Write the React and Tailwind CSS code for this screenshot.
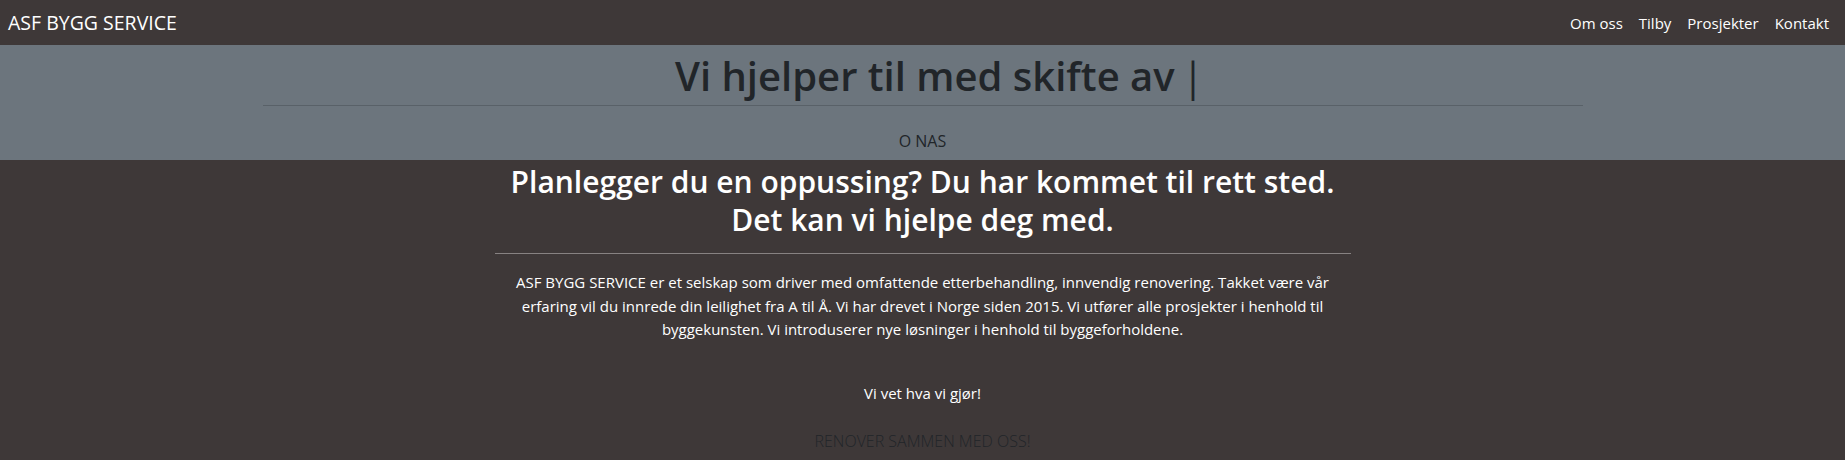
export default function App() {
  const links = ['Om oss', 'Tilby', 'Prosjekter', 'Kontakt']

  return (
    <div className="min-h-screen bg-[#3e3838] text-white" style={{ fontFamily: '"Open Sans", "Noto Sans", sans-serif' }}>
      {/* Navbar */}
      <nav className="h-[45px] flex items-center justify-between px-2 bg-[#3e3838]">
        <a href="#" className="text-[19.5px] text-white leading-none">ASF BYGG SERVICE</a>
        <ul className="flex items-center">
          {links.map((l) => (
            <li key={l}>
              <a href="#" className="px-2 text-[15px] text-white">{l}</a>
            </li>
          ))}
        </ul>
      </nav>

      {/* Typed banner */}
      <header className="bg-[#6c757d] pt-[7px] pb-[7px] text-center text-[#212529]">
        <div className="w-[1320px] mx-auto">
          <h1 className="pl-[34px] text-[40px] leading-[48px] font-semibold">
            Vi hjelper til med skifte av <span className="-ml-[3px] font-normal">|</span>
          </h1>
          <hr className="mt-[5px] border-0 h-px bg-[#596168]" />
          <p className="mt-[23px] text-[16px] leading-6">O NAS</p>
        </div>
      </header>

      {/* About */}
      <section className="text-center">
        <div className="w-[856px] mx-auto pt-[3px]">
          <h2 className="text-[30px] leading-[38px] font-semibold">
            Planlegger du en oppussing? Du har kommet til rett sted.<br />
            Det kan vi hjelpe deg med.
          </h2>
          <hr className="mt-[14px] border-0 h-px bg-[#878282]" />
          <p className="mt-[17px] text-[15px] leading-[23.5px]">
            ASF BYGG SERVICE er et selskap som driver med omfattende etterbehandling, innvendig renovering. Takket være vår
            erfaring vil du innrede din leilighet fra A til Å. Vi har drevet i Norge siden 2015. Vi utfører alle prosjekter i henhold til
            byggekunsten. Vi introduserer nye løsninger i henhold til byggeforholdene.
          </p>
          <p className="mt-[39px] text-[15px] leading-6">Vi vet hva vi gjør!</p>
          <p className="mt-[24px] text-[16px] leading-6 font-light text-[#212529]">RENOVER SAMMEN MED OSS!</p>
        </div>
      </section>
    </div>
  )
}
